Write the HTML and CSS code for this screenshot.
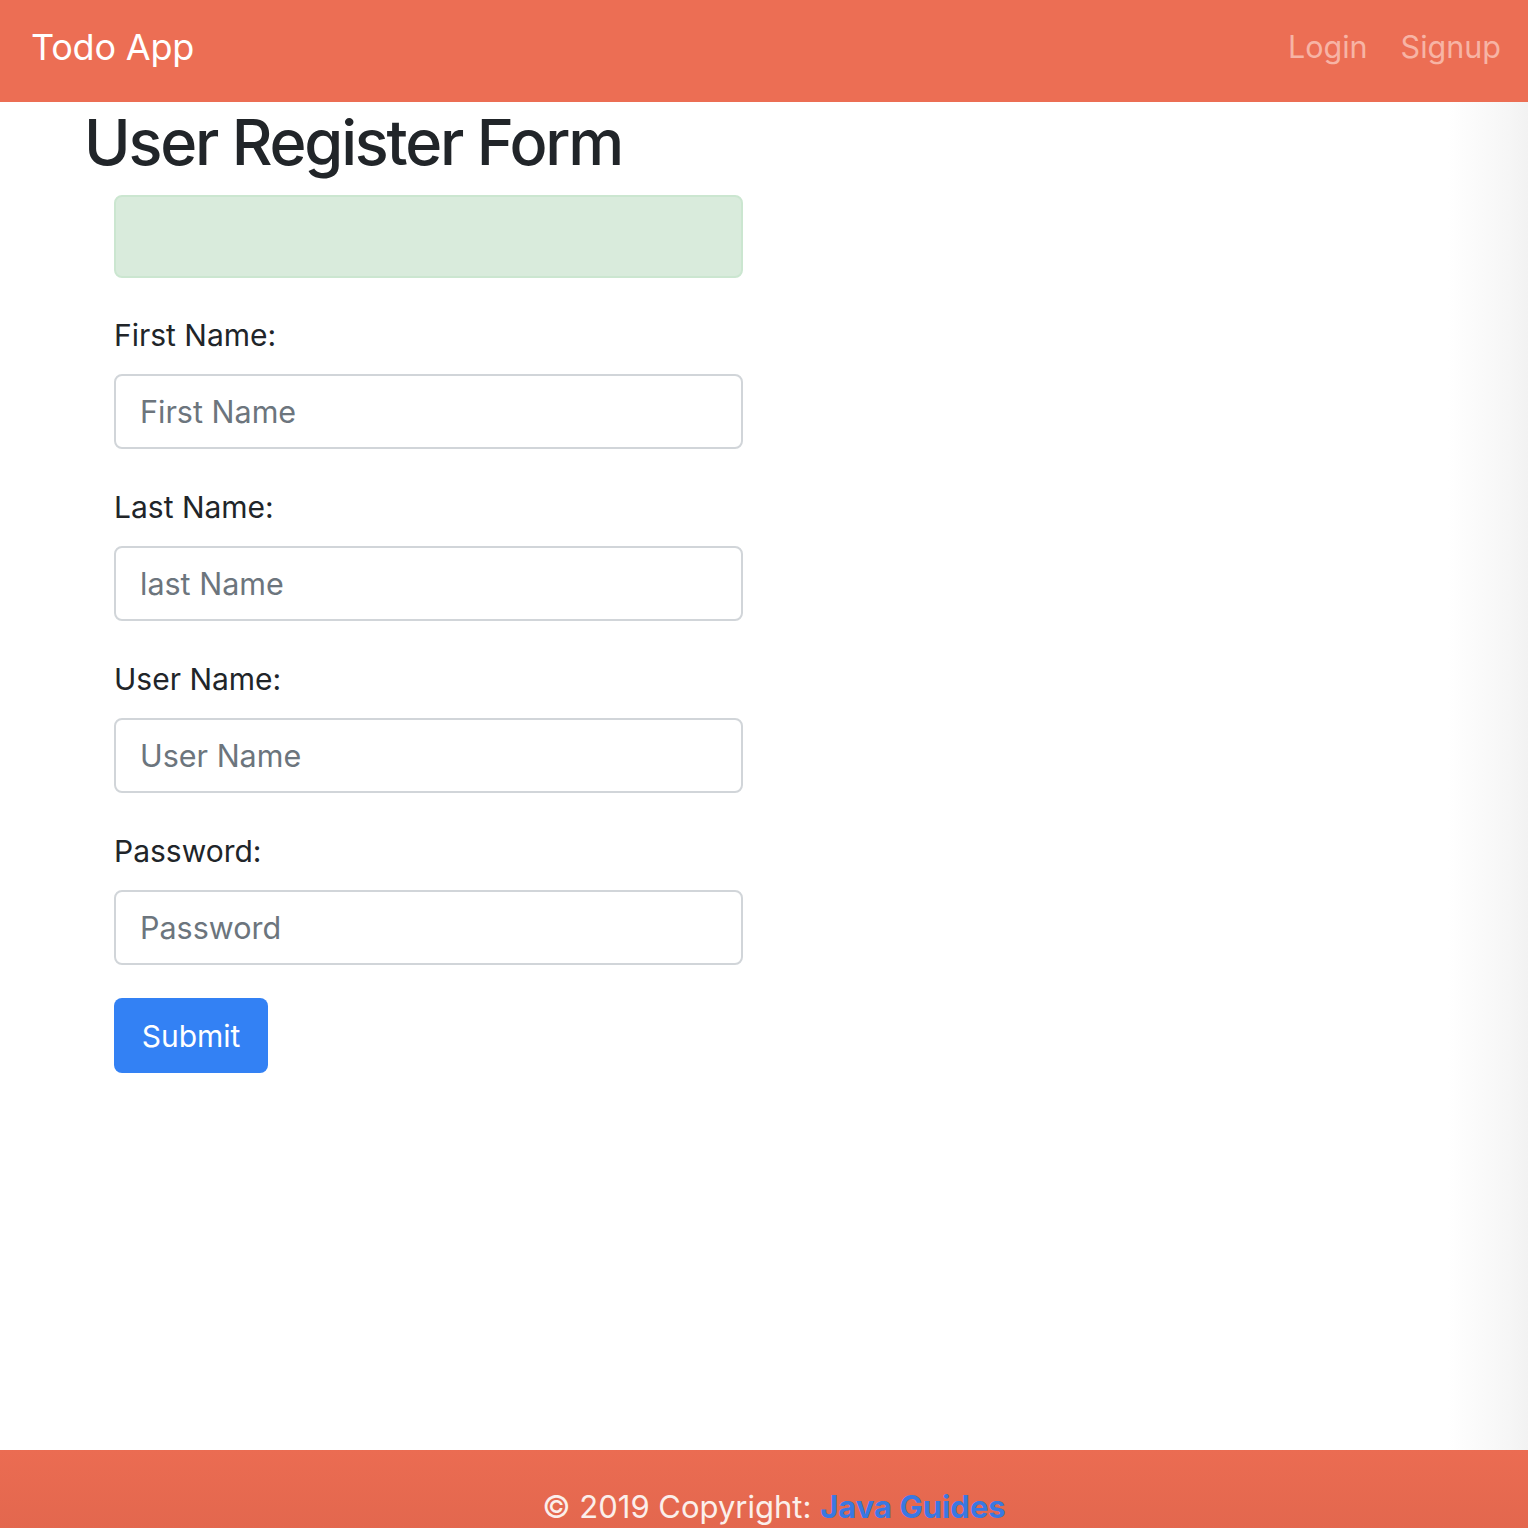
FILE: index.html
```html
<!DOCTYPE html>
<html lang="en">
<head>
<meta charset="utf-8">
<title>Todo App</title>
<link rel="stylesheet" href="styles.css">
</head>
<body>
<header class="navbar">
  <a class="brand" href="#">Todo App</a>
  <nav class="nav-links">
    <a class="nav-link" href="#">Login</a>
    <a class="nav-link" href="#">Signup</a>
  </nav>
</header>
<main class="page-main">
  <h1 class="title">User Register Form</h1>
  <form class="register-form">
    <div class="alert"></div>
    <div class="form-group">
      <label class="form-label" for="fn">First Name:</label>
      <input class="form-control" id="fn" type="text" placeholder="First Name">
    </div>
    <div class="form-group">
      <label class="form-label" for="ln">Last Name:</label>
      <input class="form-control" id="ln" type="text" placeholder="last Name">
    </div>
    <div class="form-group">
      <label class="form-label" for="un">User Name:</label>
      <input class="form-control" id="un" type="text" placeholder="User Name">
    </div>
    <div class="form-group form-group-last">
      <label class="form-label" for="pw">Password:</label>
      <input class="form-control" id="pw" type="password" placeholder="Password">
    </div>
    <button class="btn-primary" type="button">Submit</button>
  </form>
</main>
<footer class="footer">
  <span class="footer-text">© 2019 Copyright: <a class="footer-link" href="#">Java Guides</a></span>
</footer>
</body>
</html>
```
FILE: styles.css
```css
html, body {
  margin: 0;
  padding: 0;
}
body {
  font-family: Inter, "Liberation Sans", sans-serif;
  color: #212529;
  display: flex;
  flex-direction: column;
  height: 1528px;
  overflow: hidden;
}
.navbar {
  flex: 0 0 102px;
  box-sizing: border-box;
  height: 102px;
  background: #ec6e54;
  display: flex;
  align-items: flex-start;
  justify-content: space-between;
  padding: 0 27px 0 31px;
}
.brand {
  font-size: 36px;
  line-height: 45px;
  color: #ffffff;
  text-decoration: none;
  margin-top: 25px;
  letter-spacing: -0.2px;
}
.nav-links {
  display: flex;
  gap: 33px;
  margin-top: 24px;
}
.nav-link {
  font-size: 30.5px;
  line-height: 45px;
  color: #f7b4a5;
  text-decoration: none;
}
.page-main {
  flex: 1 1 auto;
  background: linear-gradient(to right, #ffffff calc(100% - 80px), #f6f6f6 calc(100% - 20px), #f2f2f2 100%);
  padding: 0;
}
.title {
  margin: 4px 0 0 84px;
  font-size: 63px;
  line-height: 72px;
  font-weight: 500;
  letter-spacing: -2.2px;
  color: #212529;
}
.register-form {
  width: 629px;
  margin: 17px 0 0 114px;
  display: flex;
  flex-direction: column;
}
.alert {
  box-sizing: border-box;
  height: 83px;
  background: #d9ebdc;
  border: 2px solid #cbe6d0;
  border-radius: 8px;
  margin-bottom: 35px;
}
.form-group {
  display: flex;
  flex-direction: column;
  margin-bottom: 36px;
}
.form-group-last {
  margin-bottom: 33px;
}
.form-label {
  font-size: 30px;
  line-height: 45px;
  margin-bottom: 16px;
  color: #212529;
}
.form-control {
  box-sizing: border-box;
  height: 75px;
  width: 100%;
  border: 2px solid #d1d5d9;
  border-radius: 8px;
  padding: 0 24px;
  font-family: Inter, "Liberation Sans", sans-serif;
  font-size: 30.5px;
  color: #495057;
  background: #ffffff;
  outline: none;
}
.form-control::placeholder {
  color: #6c757d;
  opacity: 1;
}
.btn-primary {
  align-self: flex-start;
  box-sizing: border-box;
  width: 154px;
  height: 75px;
  border: none;
  border-radius: 8px;
  background: #3381f4;
  color: #ffffff;
  font-family: Inter, "Liberation Sans", sans-serif;
  font-size: 30px;
  padding: 0;
  cursor: pointer;
}
.footer {
  flex: 0 0 78px;
  height: 78px;
  box-sizing: border-box;
  overflow: hidden;
  background: linear-gradient(to bottom, #eb6c52, #e3674e);
  text-align: center;
  padding: 34px 0 0 20px;
}
.footer-text {
  font-size: 31px;
  line-height: 45px;
  color: #fbefeb;
}
.footer-link {
  color: #3a78e2;
  font-weight: 700;
  text-decoration: none;
}
```
